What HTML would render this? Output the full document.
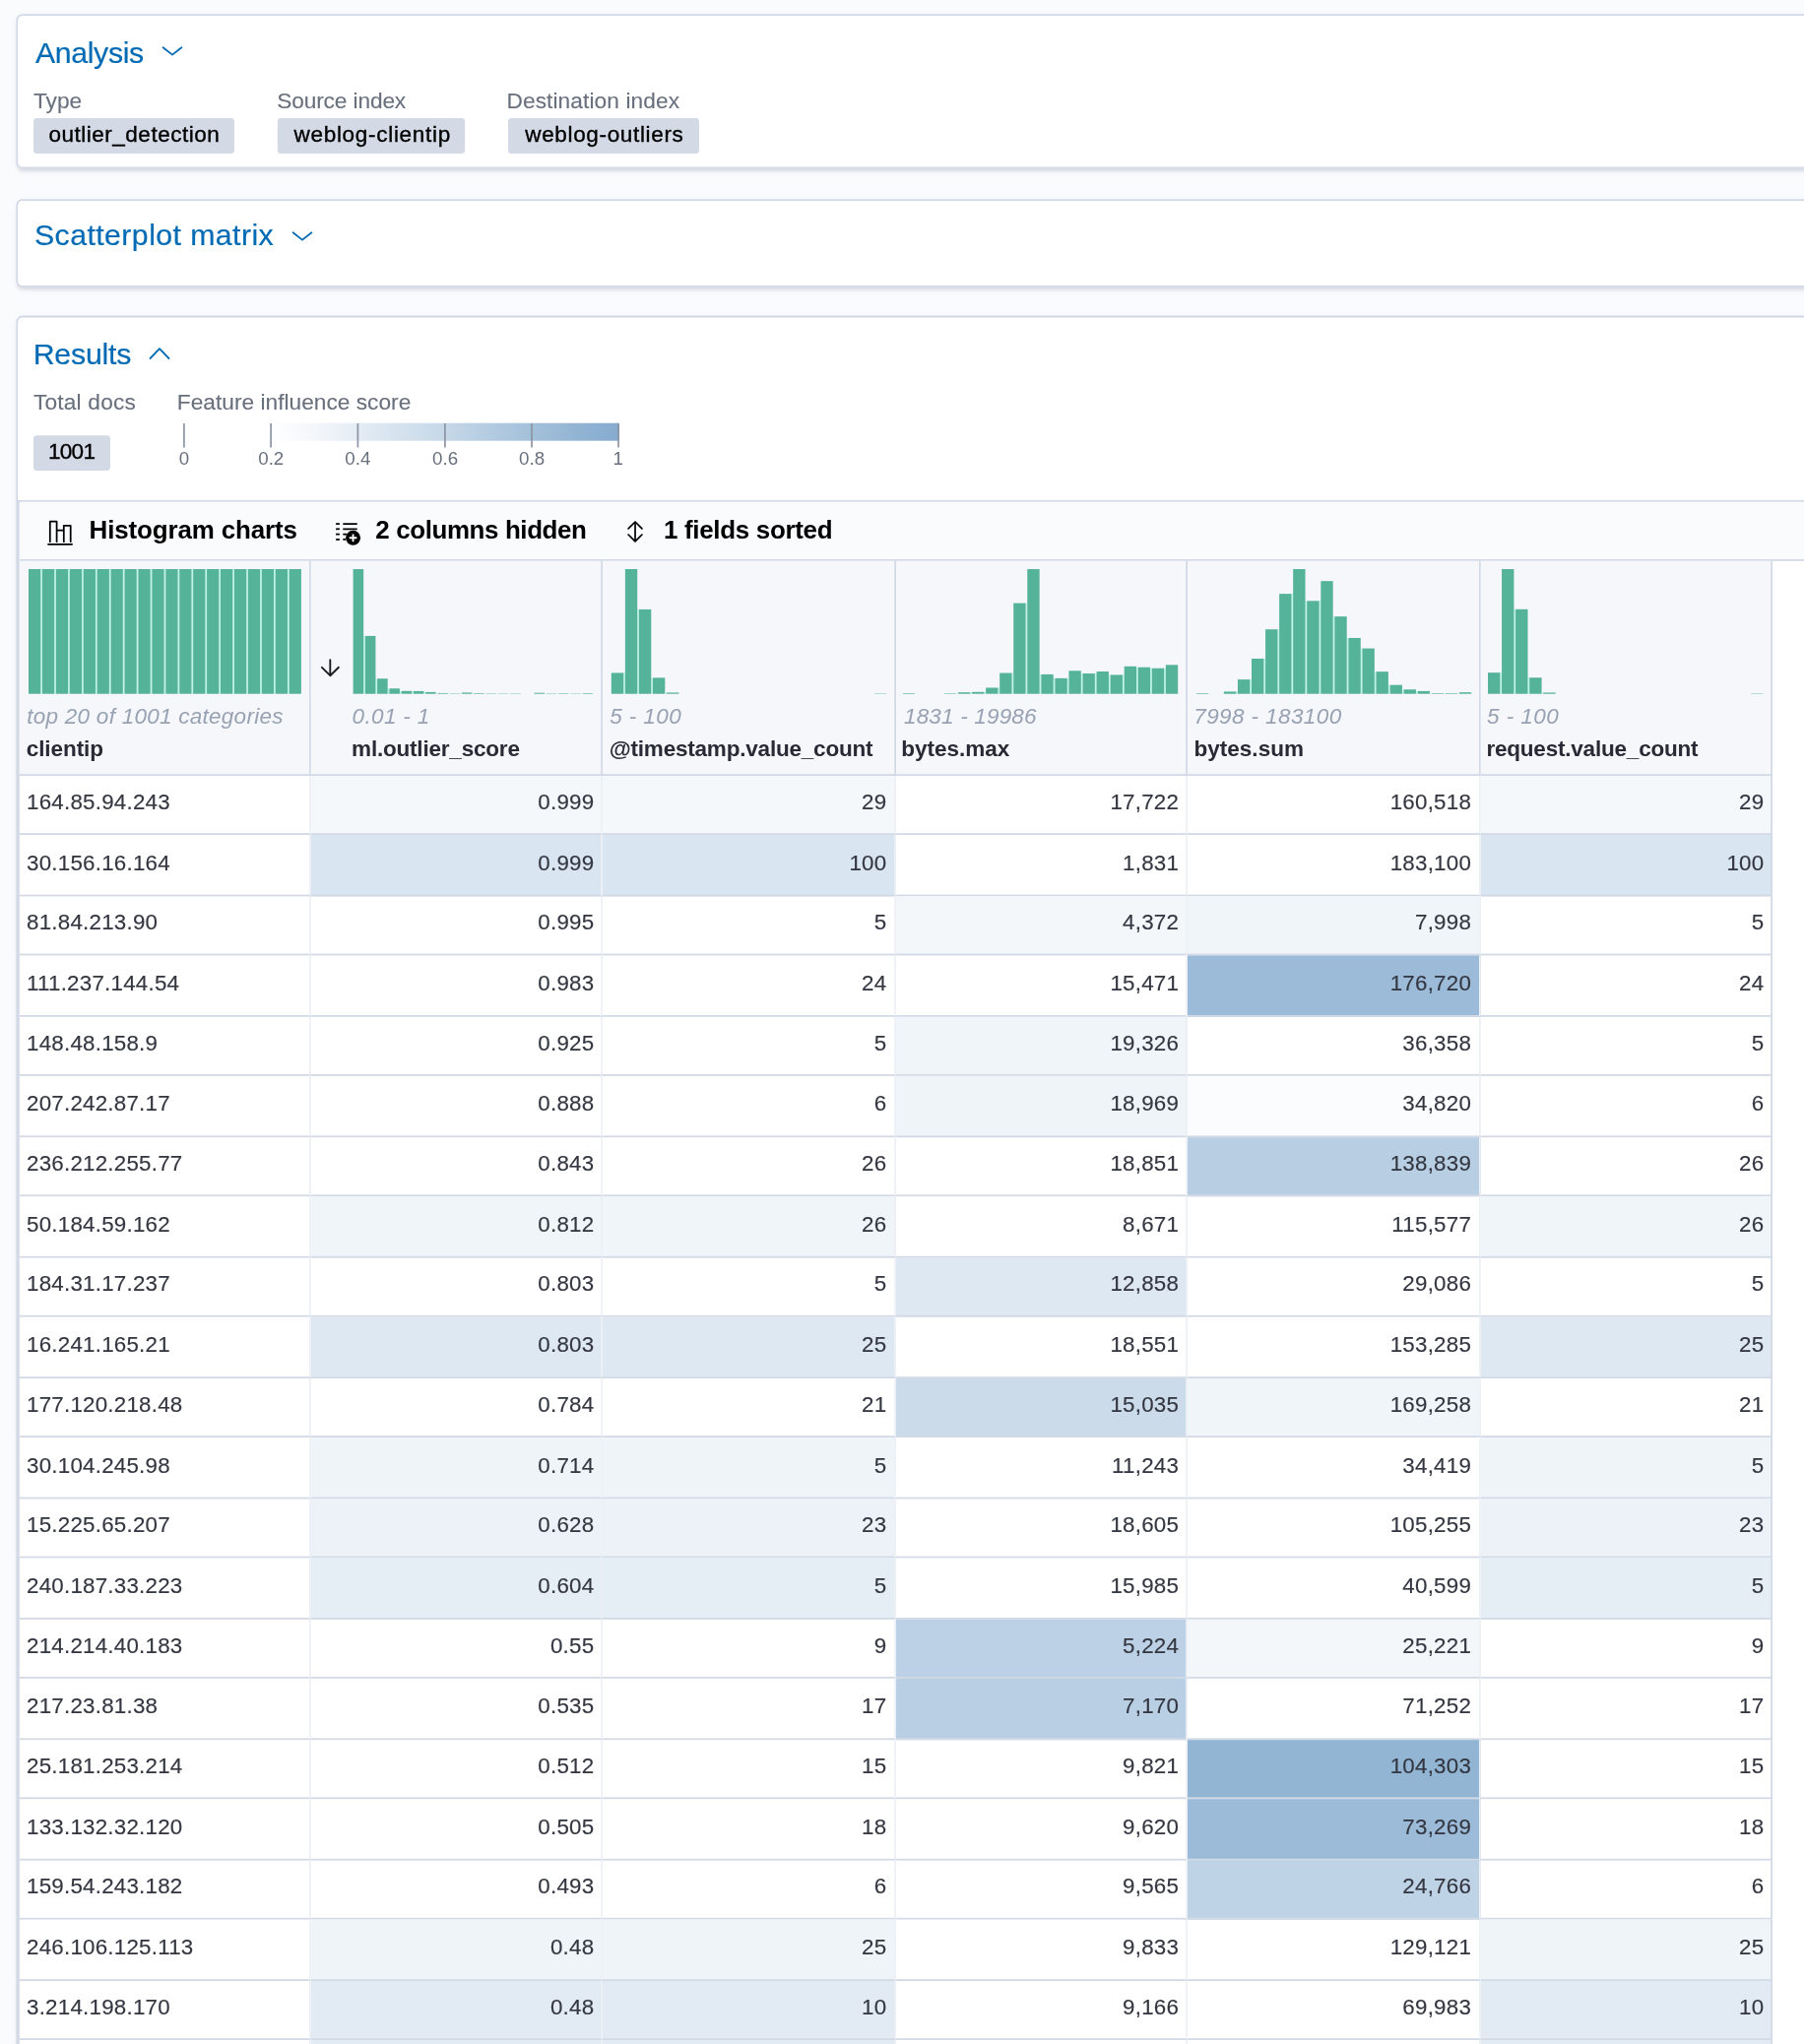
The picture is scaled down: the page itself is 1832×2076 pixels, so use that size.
<!DOCTYPE html>
<html lang="en"><head><meta charset="utf-8"><title>Outlier detection results</title>
<style>
html,body{margin:0;padding:0;background:#fafbfd;overflow:hidden}
body{width:1832px;height:2076px;position:relative}
#app{position:absolute;left:0;top:0;width:9160.0px;height:10380.0px;transform:translateZ(0) scale(0.2);transform-origin:0 0;font-family:"Liberation Sans", Arial, sans-serif;color:#343741;overflow:hidden}
#app *{box-sizing:border-box}
.panel{position:absolute;background:#fff;border:9.0px solid #d3dae6;border-radius:31.0px;box-shadow:0 18.0px 18.0px -9.0px rgba(152,162,179,.3),0 9.0px 45.0px -18.0px rgba(152,162,179,.3)}
.tx{position:absolute;margin:0;padding:0;line-height:1;white-space:nowrap;font-weight:400}
.badge{position:absolute;background:#d3dae6;border-radius:17.0px}
svg{position:absolute;overflow:visible}
.dg{position:absolute;border-left:9.0px solid #d3dae6;border-top:9.0px solid #d3dae6;background:#fff}
.tb{position:absolute;background:#fafbfd;border-bottom:9.0px solid #d3dae6}
.hc{position:absolute;background:#f5f7fa;border-right:9.0px solid #d3dae6;border-bottom:9.0px solid #d3dae6}
.row{position:absolute;left:0}
header,.stat,.tbtn{position:absolute;left:0;top:0}
.cell{position:absolute;top:0;border-right:9.0px solid #edf0f5;border-bottom:9.0px solid #d3dae6;font-size:111.6px;letter-spacing:1.2px;line-height:1;white-space:nowrap;color:#343741;-webkit-text-stroke:0.8px #343741}
.cell span{position:absolute}
</style></head><body>
<div id="app">
<section class="panel" style="left:81.5px;top:71.0px;width:9500.0px;height:785.5px">
<header><h3 class="tx" style="left:88.9px;top:109.5px;font-size:151.2px;color:#006bb4;letter-spacing:-1.6px;-webkit-text-stroke:1.0px #006bb4">Analysis</h3><svg class="ic" style="left:712.5px;top:120.5px" width="144.0" height="117.0" viewBox="160.60 40.10 28.80 23.40"><path d="M165.60 48.1L175.00 55.5L184.40 48.1" fill="none" stroke="#006bb4" stroke-width="1.8" stroke-linecap="round" stroke-linejoin="round"/></svg></header>
<div class="stat"><label class="tx" style="left:79.2px;top:374.0px;font-size:113.4px;color:#69707d;letter-spacing:0.1px;-webkit-text-stroke:0.6px #69707d">Type</label><span class="badge" style="left:79.0px;top:520.0px;width:1020.0px;height:179.5px"></span><span class="tx" style="left:156.4px;top:543.2px;font-size:112.5px;color:#000;letter-spacing:2.6px;-webkit-text-stroke:1.8px #000">outlier_detection</span></div>
<div class="stat"><label class="tx" style="left:1315.3px;top:374.0px;font-size:113.4px;color:#69707d;letter-spacing:-0.6px;-webkit-text-stroke:0.6px #69707d">Source index</label><span class="badge" style="left:1318.5px;top:520.0px;width:951.5px;height:179.5px"></span><span class="tx" style="left:1402.2px;top:543.2px;font-size:112.5px;color:#000;letter-spacing:3.5px;-webkit-text-stroke:1.8px #000">weblog-clientip</span></div>
<div class="stat"><label class="tx" style="left:2481.7px;top:374.0px;font-size:113.4px;color:#69707d;letter-spacing:0.5px;-webkit-text-stroke:0.6px #69707d">Destination index</label><span class="badge" style="left:2489.5px;top:520.0px;width:970.0px;height:179.5px"></span><span class="tx" style="left:2575.7px;top:543.2px;font-size:112.5px;color:#000;letter-spacing:3.3px;-webkit-text-stroke:1.8px #000">weblog-outliers</span></div>
</section>
<section class="panel" style="left:81.5px;top:1011.0px;width:9500.0px;height:447.5px"><header><h3 class="tx" style="left:84.5px;top:98.5px;font-size:151.2px;color:#006bb4;letter-spacing:2.2px;-webkit-text-stroke:1.0px #006bb4">Scatterplot matrix</h3><svg class="ic" style="left:1372.5px;top:121.0px" width="144.0" height="117.0" viewBox="292.60 228.20 28.80 23.40"><path d="M297.60 236.2L307.00 243.6L316.40 236.2" fill="none" stroke="#006bb4" stroke-width="1.8" stroke-linecap="round" stroke-linejoin="round"/></svg></header></section>
<section class="panel" style="left:81.5px;top:1603.0px;width:9500.0px;height:9500.0px">
<header><h3 class="tx" style="left:78.0px;top:107.5px;font-size:151.2px;color:#006bb4;letter-spacing:-0.9px;-webkit-text-stroke:1.0px #006bb4">Results</h3><svg class="ic" style="left:647.5px;top:119.0px" width="144.0" height="129.0" viewBox="147.60 346.20 28.80 25.80"><path d="M152.50 364.0L162.00 354.2L171.50 364.0" fill="none" stroke="#006bb4" stroke-width="1.8" stroke-linecap="round" stroke-linejoin="round"/></svg></header>
<div class="stat"><label class="tx" style="left:79.2px;top:372.0px;font-size:113.4px;color:#69707d;letter-spacing:1.0px;-webkit-text-stroke:0.6px #69707d">Total docs</label><span class="badge" style="left:79.0px;top:599.0px;width:390.5px;height:179.0px"></span><span class="tx" style="left:154.8px;top:622.2px;font-size:112.5px;color:#000;letter-spacing:-3.7px;-webkit-text-stroke:1.8px #000">1001</span></div>
<div class="stat"><label class="tx" style="left:808.7px;top:373.0px;font-size:113.4px;color:#69707d;letter-spacing:0.1px;-webkit-text-stroke:0.6px #69707d">Feature influence score</label><svg class="legend" style="left:809.5px;top:513.0px" width="2300.0" height="165.0" viewBox="180.00 425.00 460.00 33.00"><defs><linearGradient id="lg" x1="0" x2="1" y1="0" y2="0"><stop offset="0" stop-color="#fff"/><stop offset="0.2" stop-color="#fff"/><stop offset="0.3" stop-color="#f4f7fb"/><stop offset="0.4" stop-color="#e4ecf4"/><stop offset="0.5" stop-color="#d4e2ee"/><stop offset="0.6" stop-color="#c6d8e8"/><stop offset="0.7" stop-color="#b4cce1"/><stop offset="0.8" stop-color="#a3c0da"/><stop offset="0.9" stop-color="#93b5d4"/><stop offset="1" stop-color="#85abce"/></linearGradient></defs><rect x="186.9" y="429.7" width="441.9" height="18" fill="url(#lg)"/><line x1="186.9" x2="186.9" y1="430" y2="454.4" stroke="#8c94a5" stroke-width="1.7"/><line x1="275.1" x2="275.1" y1="430" y2="454.4" stroke="#8c94a5" stroke-width="1.7"/><line x1="363.4" x2="363.4" y1="430" y2="454.4" stroke="#8c94a5" stroke-width="1.7"/><line x1="451.9" x2="451.9" y1="430" y2="454.4" stroke="#8c94a5" stroke-width="1.7"/><line x1="540.0" x2="540.0" y1="430" y2="454.4" stroke="#8c94a5" stroke-width="1.7"/><line x1="628.0" x2="628.0" y1="430" y2="454.4" stroke="#8c94a5" stroke-width="1.7"/></svg><span class="tx" style="left:818.0px;top:670.5px;font-size:93.6px;color:#69707d">0</span><span class="tx" style="left:1220.7px;top:670.5px;font-size:93.6px;color:#69707d">0.2</span><span class="tx" style="left:1661.2px;top:670.5px;font-size:93.6px;color:#69707d">0.4</span><span class="tx" style="left:2104.6px;top:670.5px;font-size:93.6px;color:#69707d">0.6</span><span class="tx" style="left:2545.1px;top:670.5px;font-size:93.6px;color:#69707d">0.8</span><span class="tx" style="left:3022.2px;top:670.5px;font-size:93.6px;color:#69707d">1</span></div>
<div class="dg" style="left:-0.5px;top:927.5px;width:9500.0px;height:9500.0px">
<div class="tb" style="left:0.0px;top:0.0px;width:9500.0px;height:300.5px">
<div class="tbtn"><svg class="ic" style="left:131.0px;top:81.5px" width="150.0" height="150.0" viewBox="46.00 526.00 30.00 30.00"><g fill="none" stroke="#000" stroke-width="1.75"><g transform="translate(0.1 -0.2)"><path d="M48.9 553.05H73.0" stroke-linecap="round"/><path d="M50.7 550.4V529.9H57.5V550.4M57.5 538.9H64.7M64.7 550.4V534.0H71.6V550.4" stroke-linecap="round" stroke-linejoin="round"/></g></g></svg><span class="tx" style="left:353.8px;top:79.5px;font-size:129.6px;color:#000;letter-spacing:-0.6px;font-weight:700">Histogram charts</span></div>
<div class="tbtn"><svg class="ic" style="left:1591.0px;top:81.5px" width="150.0" height="150.0" viewBox="338.00 526.00 30.00 30.00"><g fill="none" stroke="#000" stroke-width="1.75"><path d="M341.1 532.06H344.9"/><path d="M341.1 537.3H344.9"/><path d="M341.1 542.6H344.9"/><path d="M341.1 547.95H344.9"/><path d="M348.3 532.06H362.7M348.3 537.3H362.7M348.3 542.6H352M348.3 547.95H351"/></g><circle cx="358.55" cy="546.3" r="7.5" fill="#000"/><path d="M354.7 546.3H362.4M358.55 542.45V550.15" stroke="#fff" stroke-width="1.9" fill="none"/></svg><span class="tx" style="left:1807.5px;top:79.5px;font-size:129.6px;color:#000;letter-spacing:-1.9px;font-weight:700">2 columns hidden</span></div>
<div class="tbtn"><svg class="ic" style="left:3061.0px;top:81.5px" width="140.0" height="150.0" viewBox="632.00 526.00 28.00 30.00"><path d="M645.03 530.6V549.3M638.1 536.9L645.03 530.0L651.95 536.9M638.1 543.0L645.03 549.9L651.95 543.0" fill="none" stroke="#000" stroke-width="1.7" stroke-linecap="round" stroke-linejoin="round"/></svg><span class="tx" style="left:3270.8px;top:79.5px;font-size:129.6px;color:#000;letter-spacing:-1.5px;font-weight:700">1 fields sorted</span></div>
</div>
<div class="hc" style="left:0.0px;top:300.5px;width:1479.5px;height:1091.0px"><svg class="hist" style="left:41.0px;top:35.5px" width="1394.5" height="643.5" viewBox="28.00 576.90 278.90 128.70"><g fill="#54b399"><g fill="#bdf5e8"><rect x="41.23" y="577.90" width="1.70" height="126.70"/><rect x="55.16" y="577.90" width="1.70" height="126.70"/><rect x="69.09" y="577.90" width="1.70" height="126.70"/><rect x="83.02" y="577.90" width="1.70" height="126.70"/><rect x="96.95" y="577.90" width="1.70" height="126.70"/><rect x="110.88" y="577.90" width="1.70" height="126.70"/><rect x="124.81" y="577.90" width="1.70" height="126.70"/><rect x="138.74" y="577.90" width="1.70" height="126.70"/><rect x="152.67" y="577.90" width="1.70" height="126.70"/><rect x="166.60" y="577.90" width="1.70" height="126.70"/><rect x="180.53" y="577.90" width="1.70" height="126.70"/><rect x="194.46" y="577.90" width="1.70" height="126.70"/><rect x="208.39" y="577.90" width="1.70" height="126.70"/><rect x="222.32" y="577.90" width="1.70" height="126.70"/><rect x="236.25" y="577.90" width="1.70" height="126.70"/><rect x="250.18" y="577.90" width="1.70" height="126.70"/><rect x="264.11" y="577.90" width="1.70" height="126.70"/><rect x="278.04" y="577.90" width="1.70" height="126.70"/><rect x="291.97" y="577.90" width="1.70" height="126.70"/></g><rect x="29.00" y="577.90" width="12.23" height="126.70"/><rect x="42.93" y="577.90" width="12.23" height="126.70"/><rect x="56.86" y="577.90" width="12.23" height="126.70"/><rect x="70.79" y="577.90" width="12.23" height="126.70"/><rect x="84.72" y="577.90" width="12.23" height="126.70"/><rect x="98.65" y="577.90" width="12.23" height="126.70"/><rect x="112.58" y="577.90" width="12.23" height="126.70"/><rect x="126.51" y="577.90" width="12.23" height="126.70"/><rect x="140.44" y="577.90" width="12.23" height="126.70"/><rect x="154.37" y="577.90" width="12.23" height="126.70"/><rect x="168.30" y="577.90" width="12.23" height="126.70"/><rect x="182.23" y="577.90" width="12.23" height="126.70"/><rect x="196.16" y="577.90" width="12.23" height="126.70"/><rect x="210.09" y="577.90" width="12.23" height="126.70"/><rect x="224.02" y="577.90" width="12.23" height="126.70"/><rect x="237.95" y="577.90" width="12.23" height="126.70"/><rect x="251.88" y="577.90" width="12.23" height="126.70"/><rect x="265.81" y="577.90" width="12.23" height="126.70"/><rect x="279.74" y="577.90" width="12.23" height="126.70"/><rect x="293.67" y="577.90" width="12.23" height="126.70"/></g></svg><span class="tx" style="left:37.2px;top:732.5px;font-size:112.5px;color:#98a2b3;letter-spacing:1.3px;font-style:italic">top 20 of 1001 categories</span><span class="tx" style="left:34.5px;top:894.5px;font-size:112.5px;color:#282b35;letter-spacing:-0.3px;font-weight:700">clientip</span></div>
<div class="hc" style="left:1479.5px;top:300.5px;width:1481.5px;height:1091.0px"><svg class="ic" style="left:31.5px;top:481.0px" width="140.0" height="130.0" viewBox="322.00 666.00 28.00 26.00"><path d="M335.3 670.2V685.6M326.9 677.8L335.3 686.2L343.9 677.8" fill="none" stroke="#1a1c21" stroke-width="1.9" stroke-linecap="round" stroke-linejoin="round"/></svg><svg class="hist" style="left:209.5px;top:35.5px" width="1227.5" height="643.5" viewBox="357.60 576.90 245.50 128.70"><g fill="#54b399"><g fill="#bdf5e8"><rect x="369.16" y="645.81" width="1.70" height="58.79"/><rect x="381.42" y="689.14" width="1.70" height="15.46"/><rect x="393.68" y="699.15" width="1.70" height="5.45"/><rect x="405.94" y="701.69" width="1.70" height="2.91"/><rect x="418.20" y="701.81" width="1.70" height="2.79"/><rect x="430.46" y="702.83" width="1.70" height="1.77"/></g><rect x="358.60" y="577.90" width="10.56" height="126.70"/><rect x="370.86" y="645.81" width="10.56" height="58.79"/><rect x="383.12" y="689.14" width="10.56" height="15.46"/><rect x="395.38" y="699.15" width="10.56" height="5.45"/><rect x="407.64" y="701.69" width="10.56" height="2.91"/><rect x="419.90" y="701.81" width="10.56" height="2.79"/><rect x="432.16" y="702.83" width="10.56" height="1.77"/><rect x="444.42" y="703.84" width="10.56" height="0.76"/><rect x="456.68" y="704.22" width="10.56" height="0.38"/><rect x="468.94" y="703.33" width="10.56" height="1.27"/><rect x="481.20" y="703.97" width="10.56" height="0.63"/><rect x="493.46" y="704.22" width="10.56" height="0.38"/><rect x="505.72" y="704.25" width="10.56" height="0.35"/><rect x="517.98" y="704.25" width="10.56" height="0.35"/><rect x="542.50" y="703.59" width="10.56" height="1.01"/><rect x="554.76" y="704.22" width="10.56" height="0.38"/><rect x="567.02" y="704.09" width="10.56" height="0.51"/><rect x="579.28" y="704.25" width="10.56" height="0.35"/><rect x="591.54" y="703.97" width="10.56" height="0.63"/></g></svg><span class="tx" style="left:209.4px;top:732.5px;font-size:112.5px;color:#98a2b3;letter-spacing:1.7px;font-style:italic">0.01 - 1</span><span class="tx" style="left:206.9px;top:894.5px;font-size:112.5px;color:#282b35;letter-spacing:-1.0px;font-weight:700">ml.outlier_score</span></div>
<div class="hc" style="left:2961.0px;top:300.5px;width:1489.8px;height:1091.0px"><svg class="hist" style="left:39.0px;top:35.5px" width="1407.0" height="643.5" viewBox="619.80 576.90 281.40 128.70"><g fill="#54b399"><g fill="#bdf5e8"><rect x="633.15" y="683.31" width="1.70" height="21.29"/><rect x="647.21" y="618.82" width="1.70" height="85.78"/><rect x="661.26" y="688.26" width="1.70" height="16.34"/><rect x="675.32" y="703.33" width="1.70" height="1.27"/></g><rect x="620.80" y="683.31" width="12.36" height="21.29"/><rect x="634.85" y="577.90" width="12.36" height="126.70"/><rect x="648.91" y="618.82" width="12.36" height="85.78"/><rect x="662.96" y="688.26" width="12.36" height="16.34"/><rect x="677.02" y="703.33" width="12.36" height="1.27"/><rect x="887.85" y="704.22" width="12.36" height="0.38"/></g></svg><span class="tx" style="left:36.6px;top:732.5px;font-size:112.5px;color:#98a2b3;letter-spacing:1.9px;font-style:italic">5 - 100</span><span class="tx" style="left:33.7px;top:894.5px;font-size:112.5px;color:#282b35;letter-spacing:-1.0px;font-weight:700">@timestamp.value_count</span></div>
<div class="hc" style="left:4450.8px;top:300.5px;width:1480.0px;height:1091.0px"><svg class="hist" style="left:28.8px;top:35.5px" width="1407.0" height="643.5" viewBox="915.70 576.90 281.40 128.70"><g fill="#54b399"><g fill="#bdf5e8"><rect x="985.28" y="703.08" width="1.70" height="1.52"/><rect x="999.33" y="702.70" width="1.70" height="1.90"/><rect x="1013.38" y="698.39" width="1.70" height="6.21"/><rect x="1027.44" y="683.44" width="1.70" height="21.16"/><rect x="1041.49" y="612.49" width="1.70" height="92.11"/><rect x="1055.55" y="684.83" width="1.70" height="19.77"/><rect x="1069.61" y="688.76" width="1.70" height="15.84"/><rect x="1083.66" y="688.76" width="1.70" height="15.84"/><rect x="1097.71" y="683.95" width="1.70" height="20.65"/><rect x="1111.77" y="683.95" width="1.70" height="20.65"/><rect x="1125.83" y="685.34" width="1.70" height="19.26"/><rect x="1139.88" y="685.34" width="1.70" height="19.26"/><rect x="1153.93" y="677.61" width="1.70" height="26.99"/><rect x="1167.99" y="678.63" width="1.70" height="25.97"/><rect x="1182.04" y="678.63" width="1.70" height="25.97"/></g><rect x="916.70" y="703.97" width="12.35" height="0.63"/><rect x="958.87" y="704.09" width="12.35" height="0.51"/><rect x="972.92" y="703.08" width="12.35" height="1.52"/><rect x="986.98" y="702.70" width="12.35" height="1.90"/><rect x="1001.03" y="698.39" width="12.35" height="6.21"/><rect x="1015.09" y="683.44" width="12.35" height="21.16"/><rect x="1029.14" y="612.49" width="12.35" height="92.11"/><rect x="1043.19" y="577.90" width="12.35" height="126.70"/><rect x="1057.25" y="684.83" width="12.35" height="19.77"/><rect x="1071.30" y="688.76" width="12.35" height="15.84"/><rect x="1085.36" y="681.16" width="12.35" height="23.44"/><rect x="1099.41" y="683.95" width="12.35" height="20.65"/><rect x="1113.47" y="681.92" width="12.35" height="22.68"/><rect x="1127.52" y="685.34" width="12.35" height="19.26"/><rect x="1141.58" y="676.73" width="12.35" height="27.87"/><rect x="1155.63" y="677.61" width="12.35" height="26.99"/><rect x="1169.69" y="678.63" width="12.35" height="25.97"/><rect x="1183.74" y="675.21" width="12.35" height="29.39"/></g></svg><span class="tx" style="left:39.9px;top:732.5px;font-size:112.5px;color:#98a2b3;letter-spacing:0.9px;font-style:italic">1831 - 19986</span><span class="tx" style="left:26.1px;top:894.5px;font-size:112.5px;color:#282b35;letter-spacing:-0.0px;font-weight:700">bytes.max</span></div>
<div class="hc" style="left:5930.8px;top:300.5px;width:1489.2px;height:1091.0px"><svg class="hist" style="left:39.2px;top:35.5px" width="1407.0" height="643.5" viewBox="1213.80 576.90 281.40 128.70"><g fill="#54b399"><g fill="#bdf5e8"><rect x="1255.26" y="702.32" width="1.70" height="2.28"/><rect x="1269.32" y="690.03" width="1.70" height="14.57"/><rect x="1283.38" y="668.87" width="1.70" height="35.73"/><rect x="1297.43" y="639.10" width="1.70" height="65.50"/><rect x="1311.48" y="602.99" width="1.70" height="101.61"/><rect x="1325.54" y="610.21" width="1.70" height="94.39"/><rect x="1339.60" y="610.21" width="1.70" height="94.39"/><rect x="1353.65" y="626.05" width="1.70" height="78.55"/><rect x="1367.70" y="647.84" width="1.70" height="56.76"/><rect x="1381.76" y="658.48" width="1.70" height="46.12"/><rect x="1395.82" y="682.05" width="1.70" height="22.55"/><rect x="1409.87" y="695.60" width="1.70" height="9.00"/><rect x="1423.92" y="700.17" width="1.70" height="4.43"/><rect x="1437.98" y="701.81" width="1.70" height="2.79"/></g><rect x="1214.80" y="703.97" width="12.36" height="0.63"/><rect x="1242.91" y="702.32" width="12.36" height="2.28"/><rect x="1256.96" y="690.03" width="12.36" height="14.57"/><rect x="1271.02" y="668.87" width="12.36" height="35.73"/><rect x="1285.08" y="639.10" width="12.36" height="65.50"/><rect x="1299.13" y="602.99" width="12.36" height="101.61"/><rect x="1313.18" y="577.90" width="12.36" height="126.70"/><rect x="1327.24" y="610.21" width="12.36" height="94.39"/><rect x="1341.30" y="590.06" width="12.36" height="114.54"/><rect x="1355.35" y="626.05" width="12.36" height="78.55"/><rect x="1369.40" y="647.84" width="12.36" height="56.76"/><rect x="1383.46" y="658.48" width="12.36" height="46.12"/><rect x="1397.51" y="682.05" width="12.36" height="22.55"/><rect x="1411.57" y="695.60" width="12.36" height="9.00"/><rect x="1425.62" y="700.17" width="12.36" height="4.43"/><rect x="1439.68" y="701.81" width="12.36" height="2.79"/><rect x="1453.74" y="703.97" width="12.36" height="0.63"/><rect x="1467.79" y="703.97" width="12.36" height="0.63"/><rect x="1481.85" y="703.08" width="12.36" height="1.52"/></g></svg><span class="tx" style="left:31.5px;top:732.5px;font-size:112.5px;color:#98a2b3;letter-spacing:2.0px;font-style:italic">7998 - 183100</span><span class="tx" style="left:32.1px;top:894.5px;font-size:112.5px;color:#282b35;letter-spacing:0.2px;font-weight:700">bytes.sum</span></div>
<div class="hc" style="left:7420.0px;top:300.5px;width:1480.5px;height:1091.0px"><svg class="hist" style="left:30.5px;top:35.5px" width="1408.0" height="643.5" viewBox="1509.90 576.90 281.60 128.70"><g fill="#54b399"><g fill="#bdf5e8"><rect x="1523.27" y="683.06" width="1.70" height="21.54"/><rect x="1537.33" y="618.70" width="1.70" height="85.90"/><rect x="1551.39" y="688.13" width="1.70" height="16.47"/><rect x="1565.46" y="703.33" width="1.70" height="1.27"/></g><rect x="1510.90" y="683.06" width="12.36" height="21.54"/><rect x="1524.97" y="577.90" width="12.36" height="126.70"/><rect x="1539.03" y="618.70" width="12.36" height="85.90"/><rect x="1553.10" y="688.13" width="12.36" height="16.47"/><rect x="1567.16" y="703.33" width="12.36" height="1.27"/><rect x="1778.13" y="704.22" width="12.36" height="0.38"/></g></svg><span class="tx" style="left:31.6px;top:732.5px;font-size:112.5px;color:#98a2b3;letter-spacing:2.1px;font-style:italic">5 - 100</span><span class="tx" style="left:27.9px;top:894.5px;font-size:112.5px;color:#282b35;letter-spacing:-1.0px;font-weight:700">request.value_count</span></div>
<div class="row" style="top:1391.5px"><div class="cell" style="left:0.0px;width:1479.5px;height:300.0px"><span style="left:36.0px;top:74.5px">164.85.94.243</span></div><div class="cell" style="left:1479.5px;width:1481.5px;height:300.0px;background:#f5f8fb"><span style="right:34.3px;top:74.5px">0.999</span></div><div class="cell" style="left:2961.0px;width:1489.8px;height:300.0px;background:#f5f8fb"><span style="right:39.0px;top:74.5px">29</span></div><div class="cell" style="left:4450.8px;width:1480.0px;height:300.0px"><span style="right:35.1px;top:74.5px">17,722</span></div><div class="cell" style="left:5930.8px;width:1489.2px;height:300.0px"><span style="right:39.8px;top:74.5px">160,518</span></div><div class="cell" style="left:7420.0px;width:1480.5px;height:300.0px;background:#f5f8fb;border-right-color:#d3dae6"><span style="right:33.8px;top:74.5px">29</span></div></div>
<div class="row" style="top:1691.5px"><div class="cell" style="left:0.0px;width:1479.5px;height:312.0px"><span style="left:36.0px;top:83.5px">30.156.16.164</span></div><div class="cell" style="left:1479.5px;width:1481.5px;height:312.0px;background:#d9e5f0"><span style="right:34.3px;top:83.5px">0.999</span></div><div class="cell" style="left:2961.0px;width:1489.8px;height:312.0px;background:#d9e5f0"><span style="right:39.0px;top:83.5px">100</span></div><div class="cell" style="left:4450.8px;width:1480.0px;height:312.0px"><span style="right:35.1px;top:83.5px">1,831</span></div><div class="cell" style="left:5930.8px;width:1489.2px;height:312.0px"><span style="right:39.8px;top:83.5px">183,100</span></div><div class="cell" style="left:7420.0px;width:1480.5px;height:312.0px;background:#d9e5f0;border-right-color:#d3dae6"><span style="right:33.8px;top:83.5px">100</span></div></div>
<div class="row" style="top:2003.5px"><div class="cell" style="left:0.0px;width:1479.5px;height:300.0px"><span style="left:36.0px;top:74.5px">81.84.213.90</span></div><div class="cell" style="left:1479.5px;width:1481.5px;height:300.0px"><span style="right:34.3px;top:74.5px">0.995</span></div><div class="cell" style="left:2961.0px;width:1489.8px;height:300.0px"><span style="right:39.0px;top:74.5px">5</span></div><div class="cell" style="left:4450.8px;width:1480.0px;height:300.0px;background:#f3f7fa"><span style="right:35.1px;top:74.5px">4,372</span></div><div class="cell" style="left:5930.8px;width:1489.2px;height:300.0px;background:#f0f5f9"><span style="right:39.8px;top:74.5px">7,998</span></div><div class="cell" style="left:7420.0px;width:1480.5px;height:300.0px;border-right-color:#d3dae6"><span style="right:33.8px;top:74.5px">5</span></div></div>
<div class="row" style="top:2303.5px"><div class="cell" style="left:0.0px;width:1479.5px;height:312.0px"><span style="left:36.0px;top:83.5px">111.237.144.54</span></div><div class="cell" style="left:1479.5px;width:1481.5px;height:312.0px"><span style="right:34.3px;top:83.5px">0.983</span></div><div class="cell" style="left:2961.0px;width:1489.8px;height:312.0px"><span style="right:39.0px;top:83.5px">24</span></div><div class="cell" style="left:4450.8px;width:1480.0px;height:312.0px"><span style="right:35.1px;top:83.5px">15,471</span></div><div class="cell" style="left:5930.8px;width:1489.2px;height:312.0px;background:#9cbbd8"><span style="right:39.8px;top:83.5px">176,720</span></div><div class="cell" style="left:7420.0px;width:1480.5px;height:312.0px;border-right-color:#d3dae6"><span style="right:33.8px;top:83.5px">24</span></div></div>
<div class="row" style="top:2615.5px"><div class="cell" style="left:0.0px;width:1479.5px;height:300.0px"><span style="left:36.0px;top:74.5px">148.48.158.9</span></div><div class="cell" style="left:1479.5px;width:1481.5px;height:300.0px"><span style="right:34.3px;top:74.5px">0.925</span></div><div class="cell" style="left:2961.0px;width:1489.8px;height:300.0px"><span style="right:39.0px;top:74.5px">5</span></div><div class="cell" style="left:4450.8px;width:1480.0px;height:300.0px;background:#f0f5f9"><span style="right:35.1px;top:74.5px">19,326</span></div><div class="cell" style="left:5930.8px;width:1489.2px;height:300.0px"><span style="right:39.8px;top:74.5px">36,358</span></div><div class="cell" style="left:7420.0px;width:1480.5px;height:300.0px;border-right-color:#d3dae6"><span style="right:33.8px;top:74.5px">5</span></div></div>
<div class="row" style="top:2915.5px"><div class="cell" style="left:0.0px;width:1479.5px;height:312.0px"><span style="left:36.0px;top:83.5px">207.242.87.17</span></div><div class="cell" style="left:1479.5px;width:1481.5px;height:312.0px"><span style="right:34.3px;top:83.5px">0.888</span></div><div class="cell" style="left:2961.0px;width:1489.8px;height:312.0px"><span style="right:39.0px;top:83.5px">6</span></div><div class="cell" style="left:4450.8px;width:1480.0px;height:312.0px;background:#eef4f8"><span style="right:35.1px;top:83.5px">18,969</span></div><div class="cell" style="left:5930.8px;width:1489.2px;height:312.0px;background:#fafcfd"><span style="right:39.8px;top:83.5px">34,820</span></div><div class="cell" style="left:7420.0px;width:1480.5px;height:312.0px;border-right-color:#d3dae6"><span style="right:33.8px;top:83.5px">6</span></div></div>
<div class="row" style="top:3227.5px"><div class="cell" style="left:0.0px;width:1479.5px;height:300.0px"><span style="left:36.0px;top:74.5px">236.212.255.77</span></div><div class="cell" style="left:1479.5px;width:1481.5px;height:300.0px"><span style="right:34.3px;top:74.5px">0.843</span></div><div class="cell" style="left:2961.0px;width:1489.8px;height:300.0px"><span style="right:39.0px;top:74.5px">26</span></div><div class="cell" style="left:4450.8px;width:1480.0px;height:300.0px"><span style="right:35.1px;top:74.5px">18,851</span></div><div class="cell" style="left:5930.8px;width:1489.2px;height:300.0px;background:#b7cee3"><span style="right:39.8px;top:74.5px">138,839</span></div><div class="cell" style="left:7420.0px;width:1480.5px;height:300.0px;border-right-color:#d3dae6"><span style="right:33.8px;top:74.5px">26</span></div></div>
<div class="row" style="top:3527.5px"><div class="cell" style="left:0.0px;width:1479.5px;height:312.0px"><span style="left:36.0px;top:83.5px">50.184.59.162</span></div><div class="cell" style="left:1479.5px;width:1481.5px;height:312.0px;background:#f0f5f9"><span style="right:34.3px;top:83.5px">0.812</span></div><div class="cell" style="left:2961.0px;width:1489.8px;height:312.0px;background:#f0f5f9"><span style="right:39.0px;top:83.5px">26</span></div><div class="cell" style="left:4450.8px;width:1480.0px;height:312.0px"><span style="right:35.1px;top:83.5px">8,671</span></div><div class="cell" style="left:5930.8px;width:1489.2px;height:312.0px"><span style="right:39.8px;top:83.5px">115,577</span></div><div class="cell" style="left:7420.0px;width:1480.5px;height:312.0px;background:#f0f5f9;border-right-color:#d3dae6"><span style="right:33.8px;top:83.5px">26</span></div></div>
<div class="row" style="top:3839.5px"><div class="cell" style="left:0.0px;width:1479.5px;height:300.0px"><span style="left:36.0px;top:74.5px">184.31.17.237</span></div><div class="cell" style="left:1479.5px;width:1481.5px;height:300.0px"><span style="right:34.3px;top:74.5px">0.803</span></div><div class="cell" style="left:2961.0px;width:1489.8px;height:300.0px"><span style="right:39.0px;top:74.5px">5</span></div><div class="cell" style="left:4450.8px;width:1480.0px;height:300.0px;background:#dee8f2"><span style="right:35.1px;top:74.5px">12,858</span></div><div class="cell" style="left:5930.8px;width:1489.2px;height:300.0px"><span style="right:39.8px;top:74.5px">29,086</span></div><div class="cell" style="left:7420.0px;width:1480.5px;height:300.0px;border-right-color:#d3dae6"><span style="right:33.8px;top:74.5px">5</span></div></div>
<div class="row" style="top:4139.5px"><div class="cell" style="left:0.0px;width:1479.5px;height:312.0px"><span style="left:36.0px;top:83.5px">16.241.165.21</span></div><div class="cell" style="left:1479.5px;width:1481.5px;height:312.0px;background:#dee8f2"><span style="right:34.3px;top:83.5px">0.803</span></div><div class="cell" style="left:2961.0px;width:1489.8px;height:312.0px;background:#dee8f2"><span style="right:39.0px;top:83.5px">25</span></div><div class="cell" style="left:4450.8px;width:1480.0px;height:312.0px"><span style="right:35.1px;top:83.5px">18,551</span></div><div class="cell" style="left:5930.8px;width:1489.2px;height:312.0px"><span style="right:39.8px;top:83.5px">153,285</span></div><div class="cell" style="left:7420.0px;width:1480.5px;height:312.0px;background:#dee8f2;border-right-color:#d3dae6"><span style="right:33.8px;top:83.5px">25</span></div></div>
<div class="row" style="top:4451.5px"><div class="cell" style="left:0.0px;width:1479.5px;height:300.0px"><span style="left:36.0px;top:74.5px">177.120.218.48</span></div><div class="cell" style="left:1479.5px;width:1481.5px;height:300.0px"><span style="right:34.3px;top:74.5px">0.784</span></div><div class="cell" style="left:2961.0px;width:1489.8px;height:300.0px"><span style="right:39.0px;top:74.5px">21</span></div><div class="cell" style="left:4450.8px;width:1480.0px;height:300.0px;background:#cbdbea"><span style="right:35.1px;top:74.5px">15,035</span></div><div class="cell" style="left:5930.8px;width:1489.2px;height:300.0px;background:#f0f5f9"><span style="right:39.8px;top:74.5px">169,258</span></div><div class="cell" style="left:7420.0px;width:1480.5px;height:300.0px;border-right-color:#d3dae6"><span style="right:33.8px;top:74.5px">21</span></div></div>
<div class="row" style="top:4751.5px"><div class="cell" style="left:0.0px;width:1479.5px;height:312.0px"><span style="left:36.0px;top:83.5px">30.104.245.98</span></div><div class="cell" style="left:1479.5px;width:1481.5px;height:312.0px;background:#eff4f9"><span style="right:34.3px;top:83.5px">0.714</span></div><div class="cell" style="left:2961.0px;width:1489.8px;height:312.0px;background:#eff4f9"><span style="right:39.0px;top:83.5px">5</span></div><div class="cell" style="left:4450.8px;width:1480.0px;height:312.0px"><span style="right:35.1px;top:83.5px">11,243</span></div><div class="cell" style="left:5930.8px;width:1489.2px;height:312.0px"><span style="right:39.8px;top:83.5px">34,419</span></div><div class="cell" style="left:7420.0px;width:1480.5px;height:312.0px;background:#eff4f9;border-right-color:#d3dae6"><span style="right:33.8px;top:83.5px">5</span></div></div>
<div class="row" style="top:5063.5px"><div class="cell" style="left:0.0px;width:1479.5px;height:300.0px"><span style="left:36.0px;top:74.5px">15.225.65.207</span></div><div class="cell" style="left:1479.5px;width:1481.5px;height:300.0px;background:#ecf2f7"><span style="right:34.3px;top:74.5px">0.628</span></div><div class="cell" style="left:2961.0px;width:1489.8px;height:300.0px;background:#ecf2f7"><span style="right:39.0px;top:74.5px">23</span></div><div class="cell" style="left:4450.8px;width:1480.0px;height:300.0px"><span style="right:35.1px;top:74.5px">18,605</span></div><div class="cell" style="left:5930.8px;width:1489.2px;height:300.0px"><span style="right:39.8px;top:74.5px">105,255</span></div><div class="cell" style="left:7420.0px;width:1480.5px;height:300.0px;background:#ecf2f7;border-right-color:#d3dae6"><span style="right:33.8px;top:74.5px">23</span></div></div>
<div class="row" style="top:5363.5px"><div class="cell" style="left:0.0px;width:1479.5px;height:312.0px"><span style="left:36.0px;top:83.5px">240.187.33.223</span></div><div class="cell" style="left:1479.5px;width:1481.5px;height:312.0px;background:#e6eef5"><span style="right:34.3px;top:83.5px">0.604</span></div><div class="cell" style="left:2961.0px;width:1489.8px;height:312.0px;background:#e6eef5"><span style="right:39.0px;top:83.5px">5</span></div><div class="cell" style="left:4450.8px;width:1480.0px;height:312.0px"><span style="right:35.1px;top:83.5px">15,985</span></div><div class="cell" style="left:5930.8px;width:1489.2px;height:312.0px"><span style="right:39.8px;top:83.5px">40,599</span></div><div class="cell" style="left:7420.0px;width:1480.5px;height:312.0px;background:#e6eef5;border-right-color:#d3dae6"><span style="right:33.8px;top:83.5px">5</span></div></div>
<div class="row" style="top:5675.5px"><div class="cell" style="left:0.0px;width:1479.5px;height:300.0px"><span style="left:36.0px;top:74.5px">214.214.40.183</span></div><div class="cell" style="left:1479.5px;width:1481.5px;height:300.0px"><span style="right:34.3px;top:74.5px">0.55</span></div><div class="cell" style="left:2961.0px;width:1489.8px;height:300.0px"><span style="right:39.0px;top:74.5px">9</span></div><div class="cell" style="left:4450.8px;width:1480.0px;height:300.0px;background:#bcd1e5"><span style="right:35.1px;top:74.5px">5,224</span></div><div class="cell" style="left:5930.8px;width:1489.2px;height:300.0px;background:#f3f7fa"><span style="right:39.8px;top:74.5px">25,221</span></div><div class="cell" style="left:7420.0px;width:1480.5px;height:300.0px;border-right-color:#d3dae6"><span style="right:33.8px;top:74.5px">9</span></div></div>
<div class="row" style="top:5975.5px"><div class="cell" style="left:0.0px;width:1479.5px;height:312.0px"><span style="left:36.0px;top:83.5px">217.23.81.38</span></div><div class="cell" style="left:1479.5px;width:1481.5px;height:312.0px"><span style="right:34.3px;top:83.5px">0.535</span></div><div class="cell" style="left:2961.0px;width:1489.8px;height:312.0px"><span style="right:39.0px;top:83.5px">17</span></div><div class="cell" style="left:4450.8px;width:1480.0px;height:312.0px;background:#b9cfe3"><span style="right:35.1px;top:83.5px">7,170</span></div><div class="cell" style="left:5930.8px;width:1489.2px;height:312.0px"><span style="right:39.8px;top:83.5px">71,252</span></div><div class="cell" style="left:7420.0px;width:1480.5px;height:312.0px;border-right-color:#d3dae6"><span style="right:33.8px;top:83.5px">17</span></div></div>
<div class="row" style="top:6287.5px"><div class="cell" style="left:0.0px;width:1479.5px;height:300.0px"><span style="left:36.0px;top:74.5px">25.181.253.214</span></div><div class="cell" style="left:1479.5px;width:1481.5px;height:300.0px"><span style="right:34.3px;top:74.5px">0.512</span></div><div class="cell" style="left:2961.0px;width:1489.8px;height:300.0px"><span style="right:39.0px;top:74.5px">15</span></div><div class="cell" style="left:4450.8px;width:1480.0px;height:300.0px"><span style="right:35.1px;top:74.5px">9,821</span></div><div class="cell" style="left:5930.8px;width:1489.2px;height:300.0px;background:#93b5d4"><span style="right:39.8px;top:74.5px">104,303</span></div><div class="cell" style="left:7420.0px;width:1480.5px;height:300.0px;border-right-color:#d3dae6"><span style="right:33.8px;top:74.5px">15</span></div></div>
<div class="row" style="top:6587.5px"><div class="cell" style="left:0.0px;width:1479.5px;height:312.0px"><span style="left:36.0px;top:83.5px">133.132.32.120</span></div><div class="cell" style="left:1479.5px;width:1481.5px;height:312.0px"><span style="right:34.3px;top:83.5px">0.505</span></div><div class="cell" style="left:2961.0px;width:1489.8px;height:312.0px"><span style="right:39.0px;top:83.5px">18</span></div><div class="cell" style="left:4450.8px;width:1480.0px;height:312.0px"><span style="right:35.1px;top:83.5px">9,620</span></div><div class="cell" style="left:5930.8px;width:1489.2px;height:312.0px;background:#9cbbd8"><span style="right:39.8px;top:83.5px">73,269</span></div><div class="cell" style="left:7420.0px;width:1480.5px;height:312.0px;border-right-color:#d3dae6"><span style="right:33.8px;top:83.5px">18</span></div></div>
<div class="row" style="top:6899.5px"><div class="cell" style="left:0.0px;width:1479.5px;height:300.0px"><span style="left:36.0px;top:74.5px">159.54.243.182</span></div><div class="cell" style="left:1479.5px;width:1481.5px;height:300.0px"><span style="right:34.3px;top:74.5px">0.493</span></div><div class="cell" style="left:2961.0px;width:1489.8px;height:300.0px"><span style="right:39.0px;top:74.5px">6</span></div><div class="cell" style="left:4450.8px;width:1480.0px;height:300.0px"><span style="right:35.1px;top:74.5px">9,565</span></div><div class="cell" style="left:5930.8px;width:1489.2px;height:300.0px;background:#bfd3e6"><span style="right:39.8px;top:74.5px">24,766</span></div><div class="cell" style="left:7420.0px;width:1480.5px;height:300.0px;border-right-color:#d3dae6"><span style="right:33.8px;top:74.5px">6</span></div></div>
<div class="row" style="top:7199.5px"><div class="cell" style="left:0.0px;width:1479.5px;height:312.0px"><span style="left:36.0px;top:83.5px">246.106.125.113</span></div><div class="cell" style="left:1479.5px;width:1481.5px;height:312.0px;background:#eff4f9"><span style="right:34.3px;top:83.5px">0.48</span></div><div class="cell" style="left:2961.0px;width:1489.8px;height:312.0px;background:#eff4f9"><span style="right:39.0px;top:83.5px">25</span></div><div class="cell" style="left:4450.8px;width:1480.0px;height:312.0px"><span style="right:35.1px;top:83.5px">9,833</span></div><div class="cell" style="left:5930.8px;width:1489.2px;height:312.0px"><span style="right:39.8px;top:83.5px">129,121</span></div><div class="cell" style="left:7420.0px;width:1480.5px;height:312.0px;background:#eff4f9;border-right-color:#d3dae6"><span style="right:33.8px;top:83.5px">25</span></div></div>
<div class="row" style="top:7511.5px"><div class="cell" style="left:0.0px;width:1479.5px;height:300.0px"><span style="left:36.0px;top:74.5px">3.214.198.170</span></div><div class="cell" style="left:1479.5px;width:1481.5px;height:300.0px;background:#e2ebf4"><span style="right:34.3px;top:74.5px">0.48</span></div><div class="cell" style="left:2961.0px;width:1489.8px;height:300.0px;background:#e2ebf4"><span style="right:39.0px;top:74.5px">10</span></div><div class="cell" style="left:4450.8px;width:1480.0px;height:300.0px"><span style="right:35.1px;top:74.5px">9,166</span></div><div class="cell" style="left:5930.8px;width:1489.2px;height:300.0px"><span style="right:39.8px;top:74.5px">69,983</span></div><div class="cell" style="left:7420.0px;width:1480.5px;height:300.0px;background:#e2ebf4;border-right-color:#d3dae6"><span style="right:33.8px;top:74.5px">10</span></div></div>
<div class="row" style="top:7811.5px"><div class="cell" style="left:0.0px;width:1479.5px;height:312.0px"></div><div class="cell" style="left:1479.5px;width:1481.5px;height:312.0px;background:#e2ebf4"></div><div class="cell" style="left:2961.0px;width:1489.8px;height:312.0px;background:#e2ebf4"></div><div class="cell" style="left:4450.8px;width:1480.0px;height:312.0px"></div><div class="cell" style="left:5930.8px;width:1489.2px;height:312.0px"></div><div class="cell" style="left:7420.0px;width:1480.5px;height:312.0px;background:#e2ebf4;border-right-color:#d3dae6"></div></div>
</div>
</section>
</div>
</body></html>
